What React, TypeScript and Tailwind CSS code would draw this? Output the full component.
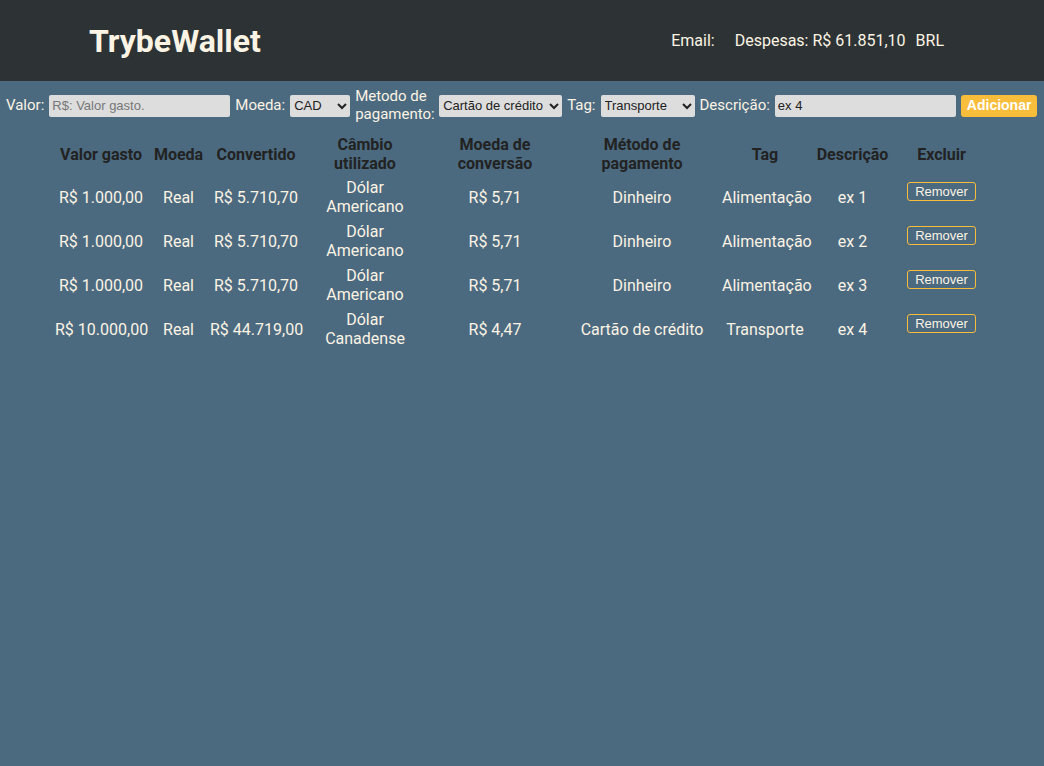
import React from "react"

const expenses = [
  { value: "R$ 1.000,00", currency: "Real", converted: "R$ 5.710,70", rate: ["Dólar", "Americano"], conv: "R$ 5,71", method: "Dinheiro", tag: "Alimentação", desc: "ex 1" },
  { value: "R$ 1.000,00", currency: "Real", converted: "R$ 5.710,70", rate: ["Dólar", "Americano"], conv: "R$ 5,71", method: "Dinheiro", tag: "Alimentação", desc: "ex 2" },
  { value: "R$ 1.000,00", currency: "Real", converted: "R$ 5.710,70", rate: ["Dólar", "Americano"], conv: "R$ 5,71", method: "Dinheiro", tag: "Alimentação", desc: "ex 3" },
  { value: "R$ 10.000,00", currency: "Real", converted: "R$ 44.719,00", rate: ["Dólar", "Canadense"], conv: "R$ 4,47", method: "Cartão de crédito", tag: "Transporte", desc: "ex 4" },
]

const field = "bg-[#dddddd] rounded-[2px] h-[22px] font-['Liberation_Sans',Arial,sans-serif] text-[13px] text-[#222] outline-none"

export default function App() {
  return (
    <div className="min-h-screen bg-[#4b6a80] font-['Roboto',sans-serif] text-[#fbf3e4]">
      {/* Header */}
      <header className="h-[81px] bg-[#2d3335] flex items-center justify-between pl-[89px] pr-[100px]">
        <h1 className="text-[32px] font-bold leading-none">TrybeWallet</h1>
        <div className="flex items-center text-[16px] gap-[20px]">
          <span>Email:</span>
          <span>
            Despesas: R$ 61.851,10 <span className="ml-[6px]">BRL</span>
          </span>
        </div>
      </header>

      {/* Form */}
      <form className="flex items-center px-[6px] pt-[7px] text-[15px] leading-[17.5px] gap-[5px]">
        <label className="flex items-center gap-[5px]">
          Valor:
          <input className={`${field} w-[181px] px-[3px] placeholder:text-[#777]`} placeholder="R$: Valor gasto." />
        </label>
        <label className="flex items-center gap-[5px]">
          Moeda:
          <select className={`${field} w-[60px]`} defaultValue="CAD">
            <option>USD</option>
            <option>CAD</option>
          </select>
        </label>
        <label className="flex items-center gap-[4px]">
          <span className="w-[80px]">Metodo de pagamento:</span>
          <select className={`${field} w-[123px]`} defaultValue="Cartão de crédito">
            <option>Dinheiro</option>
            <option>Cartão de crédito</option>
            <option>Cartão de débito</option>
          </select>
        </label>
        <label className="flex items-center gap-[5px]">
          Tag:
          <select className={`${field} w-[94px]`} defaultValue="Transporte">
            <option>Alimentação</option>
            <option>Transporte</option>
          </select>
        </label>
        <label className="flex items-center gap-[5px]">
          Descrição:
          <input className={`${field} w-[181px] px-[3px]`} defaultValue="ex 4" />
        </label>
        <button type="button" className="bg-[#f9bd3c] text-white rounded-[3px] h-[22px] px-[6px] font-['Liberation_Sans',Arial,sans-serif] font-bold text-[14px]">
          Adicionar
        </button>
      </form>

      {/* Table */}
      <table className="ml-[53px] mt-[10px] w-[935px] table-fixed text-center text-[16px] leading-[19px]">
        <thead>
          <tr className="text-[#222] font-bold">
            <th className="w-[96px] p-[2px]">Valor gasto</th>
            <th className="w-[59px] p-[2px]">Moeda</th>
            <th className="w-[96px] p-[2px]">Convertido</th>
            <th className="w-[122px] p-[2px]">Câmbio utilizado</th>
            <th className="w-[138px] p-[2px]">Moeda de conversão</th>
            <th className="w-[156px] p-[2px]"><span className="inline-block w-[90px]">Método de pagamento</span></th>
            <th className="w-[90px] p-[2px]">Tag</th>
            <th className="w-[85px] p-[2px]">Descrição</th>
            <th className="w-[93px] p-[2px]">Excluir</th>
          </tr>
        </thead>
        <tbody>
          {expenses.map((e) => (
            <tr key={e.desc} className="h-[44px]">
              <td className="p-[2px] whitespace-nowrap">{e.value}</td>
              <td className="p-[2px]">{e.currency}</td>
              <td className="p-[2px] whitespace-nowrap">{e.converted}</td>
              <td className="p-[2px]">
                {e.rate[0]}
                <br />
                {e.rate[1]}
              </td>
              <td className="p-[2px]">{e.conv}</td>
              <td className="p-[2px] whitespace-nowrap">{e.method}</td>
              <td className="p-[2px]">{e.tag}</td>
              <td className="p-[2px]">{e.desc}</td>
              <td className="p-[2px] pt-[6px] align-top">
                <button type="button" className="border border-[#f9bd3c] rounded-[3px] h-[19px] px-[7px] text-[13px] leading-[15px] font-['Liberation_Sans',Arial,sans-serif]">
                  Remover
                </button>
              </td>
            </tr>
          ))}
        </tbody>
      </table>
    </div>
  )
}
